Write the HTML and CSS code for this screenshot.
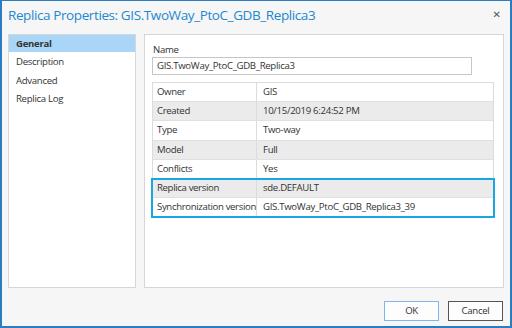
FILE: index.html
```html
<!DOCTYPE html>
<html>
<head>
<meta charset="utf-8">
<link rel="stylesheet" href="styles.css">
</head>
<body>
<div class="window">
  <div class="titlebar">
    <span class="title">Replica Properties: GIS.TwoWay_PtoC_GDB_Replica3</span>
    <span class="close">&#x2715;</span>
  </div>
  <div class="main">
    <div class="nav">
      <div class="nav-item selected">General</div>
      <div class="nav-item">Description</div>
      <div class="nav-item">Advanced</div>
      <div class="nav-item">Replica Log</div>
    </div>
    <div class="content">
      <div class="label">Name</div>
      <div class="input">GIS.TwoWay_PtoC_GDB_Replica3</div>
      <div class="table">
        <div class="row"><div class="k">Owner</div><div class="v">GIS</div></div>
        <div class="row alt"><div class="k">Created</div><div class="v">10/15/2019 6:24:52 PM</div></div>
        <div class="row"><div class="k">Type</div><div class="v">Two-way</div></div>
        <div class="row alt"><div class="k">Model</div><div class="v">Full</div></div>
        <div class="row"><div class="k">Conflicts</div><div class="v">Yes</div></div>
        <div class="group">
          <div class="row alt"><div class="k">Replica version</div><div class="v">sde.DEFAULT</div></div>
          <div class="row"><div class="k">Synchronization version</div><div class="v">GIS.TwoWay_PtoC_GDB_Replica3_39</div></div>
        </div>
      </div>
    </div>
  </div>
  <div class="footer">
    <div class="btn ok">OK</div>
    <div class="btn cancel">Cancel</div>
  </div>
</div>
</body>
</html>
```
FILE: styles.css
```css
* { box-sizing: border-box; }
html, body { margin: 0; padding: 0; }
body {
  font-family: "Open Sans", "Noto Sans", sans-serif;
  font-size: 9.6px;
  letter-spacing: -0.3px;
  color: #333;
  background: #f5f6f5;
}
.window {
  width: 512px;
  height: 328px;
  border: 2px solid #2b7cc0;
  border-top-width: 1px;
  background: #f5f6f5;
  display: flex;
  flex-direction: column;
}
.titlebar {
  height: 33px;
  display: flex;
  align-items: center;
  justify-content: space-between;
  padding: 0 9px 6px 6px;
}
.title {
  font-size: 13.5px;
  letter-spacing: -0.4px;
  color: #1e88d2;
}
.close {
  font-family: "DejaVu Sans", sans-serif;
  font-size: 10px;
  letter-spacing: 0;
  color: #555;
}
.main {
  height: 254px;
  display: flex;
  gap: 8px;
  padding: 0 6px;
}
.nav {
  width: 128px;
  background: #fff;
  border: 1px solid #d6d6d6;
}
.nav-item {
  height: 18.5px;
  line-height: 18px;
  padding-left: 7px;
  color: #333;
}
.nav-item.selected {
  background: #a9d5f6;
  font-weight: 700;
  height: 17px;
  line-height: 17px;
  margin-bottom: 1px;
}
.content {
  flex: 1;
  background: #fff;
  border: 1px solid #d6d6d6;
  padding: 7px 9px 0 7px;
}
.label {
  height: 15px;
  line-height: 15px;
  margin-left: 1px;
}
.input {
  width: 320px;
  height: 18px;
  border: 1px solid #c6c6c6;
  line-height: 16px;
  padding-left: 4px;
}
.table {
  margin-top: 7px;
  width: 342px;
  border: 1px solid #dcdcdc;
  border-bottom: none;
}
.row {
  display: flex;
  height: 19.2px;
  line-height: 18px;
  border-bottom: 1px solid #e0e0e0;
}
.row.alt { background: #ebebeb; }
.k {
  width: 104px;
  padding-left: 4px;
  border-right: 1px solid #dcdcdc;
  white-space: nowrap;
  letter-spacing: -0.35px;
}
.v {
  flex: 1;
  padding-left: 6px;
  white-space: nowrap;
}
.group {
  outline: 2px solid #1aa6e0;
  outline-offset: -1px;
  margin: 0 -1px;
  padding: 0 1px;
}
.footer {
  flex: 1;
  display: flex;
  justify-content: flex-end;
  gap: 9px;
  padding: 13px 7px 0 0;
}
.btn {
  width: 55px;
  height: 20px;
  line-height: 18px;
  text-align: center;
  background: #fdfdfd;
}
.btn.ok { border: 1px solid #7db6ea; }
.btn.cancel { border: 1px solid #555; }
```
